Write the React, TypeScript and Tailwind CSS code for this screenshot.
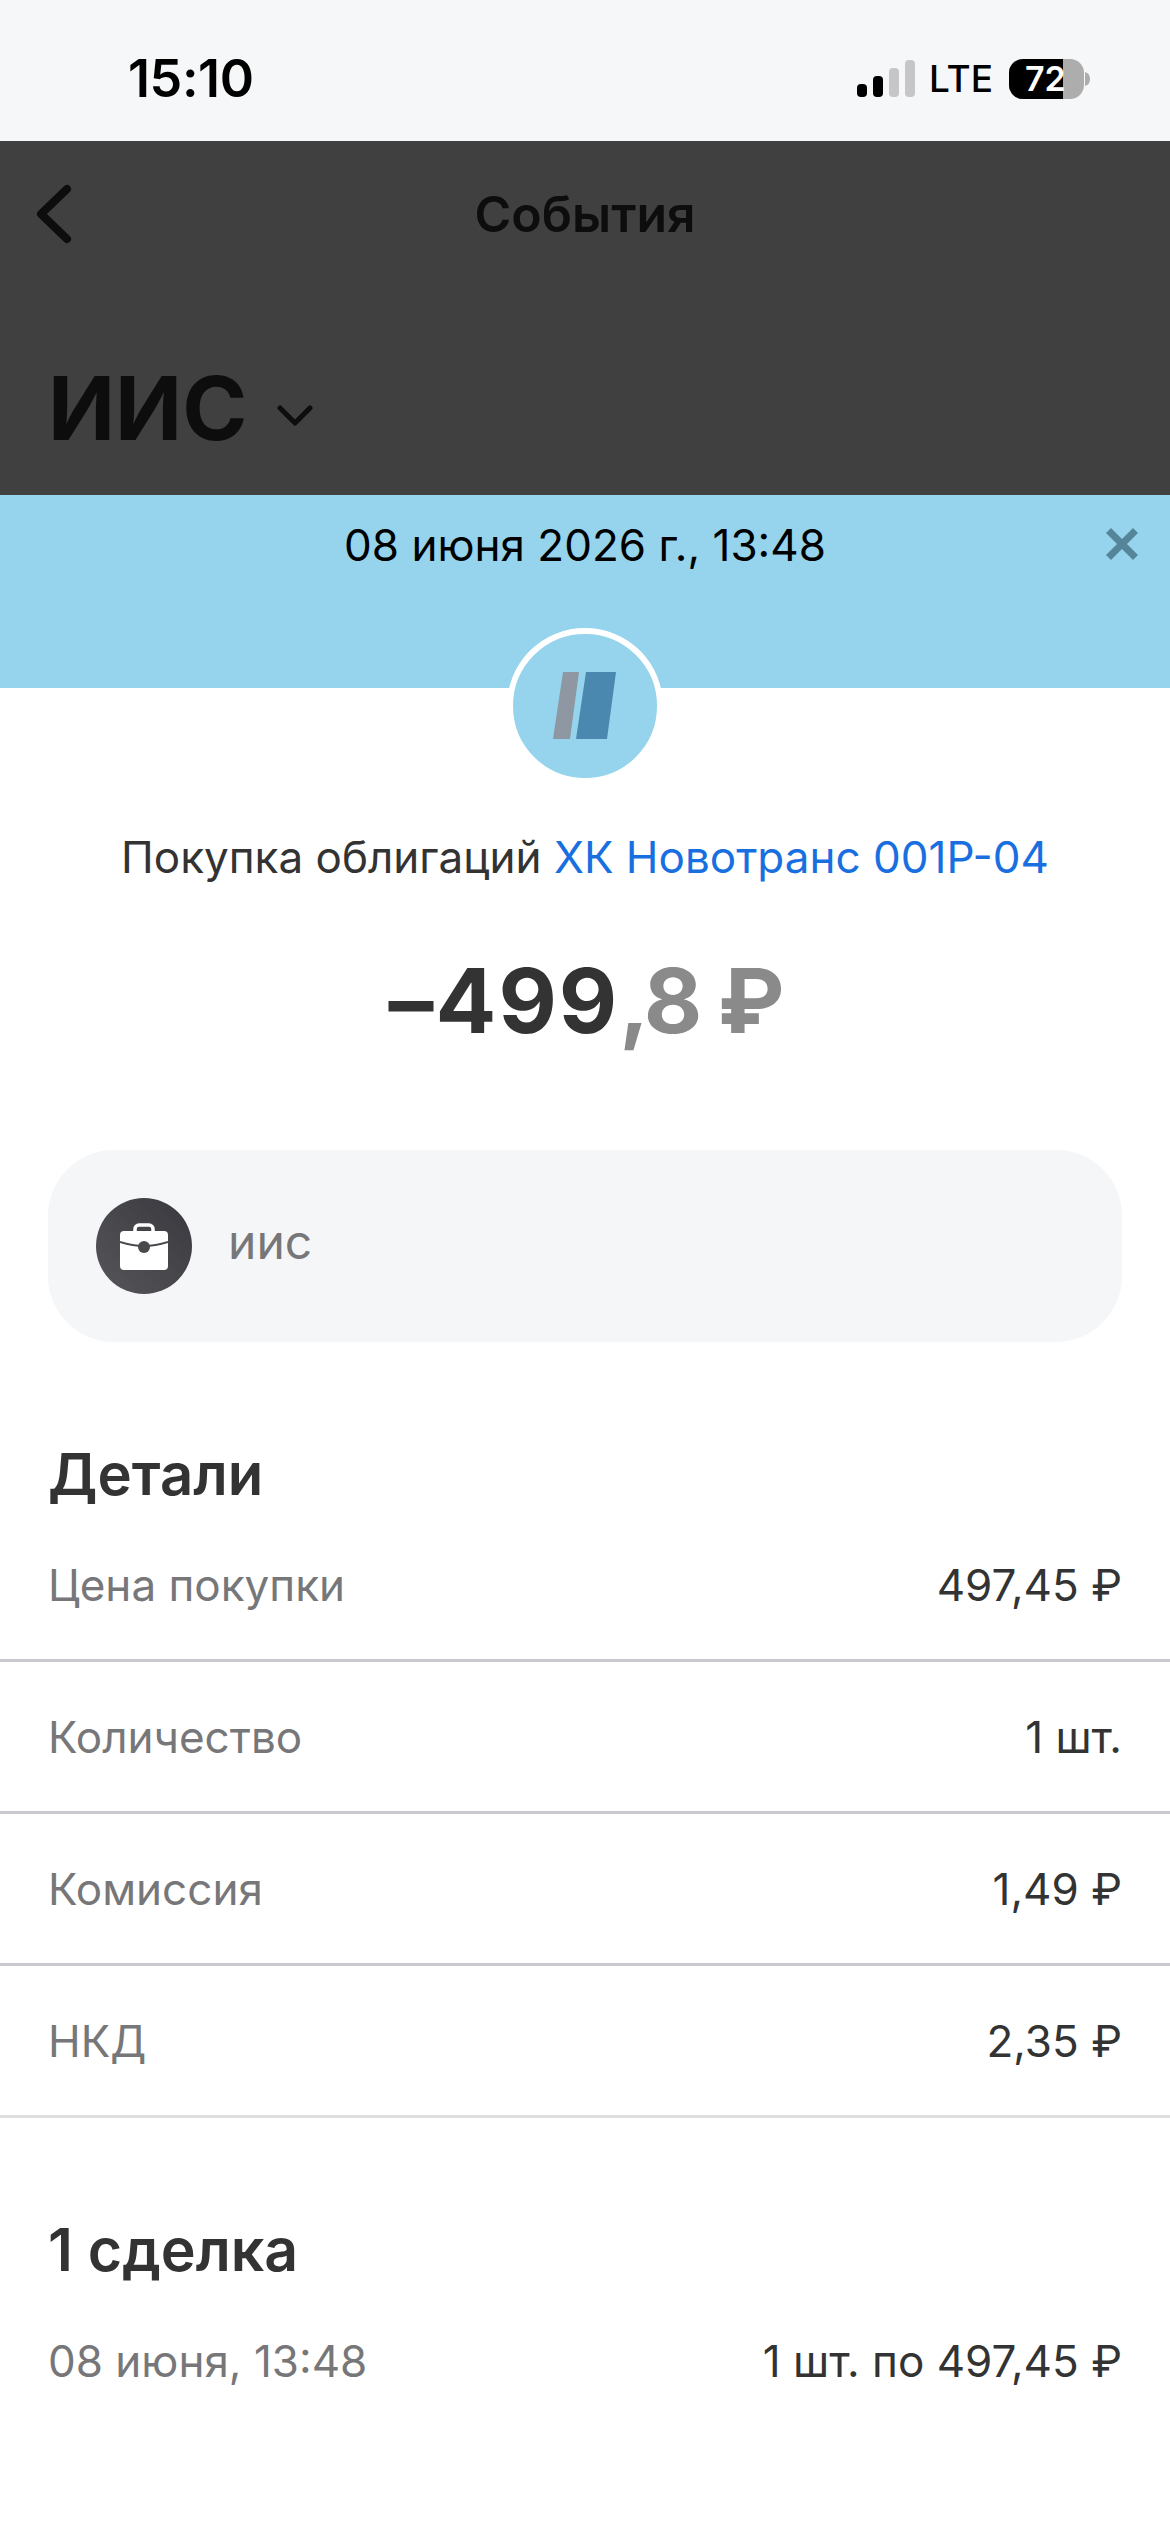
const font = { fontFamily: "Inter, 'Noto Sans', sans-serif" };

function Signal() {
  return (
    <div className="flex items-end gap-[6px] h-[37px]">
      <div className="w-[10px] h-[13px] rounded-[4px] bg-black" />
      <div className="w-[10px] h-[21px] rounded-[4px] bg-black" />
      <div className="w-[10px] h-[29px] rounded-[4px] bg-[#c6c6c8]" />
      <div className="w-[10px] h-[37px] rounded-[4px] bg-[#c6c6c8]" />
    </div>
  );
}

function Battery() {
  return (
    <div className="flex items-center">
      <div className="relative w-[75px] h-[40px] rounded-[14px] overflow-hidden bg-[#adadad]">
        <div className="absolute left-0 top-0 bottom-0 w-[54px] bg-black" />
        <div className="absolute left-[16px] top-0 bottom-0 flex items-center text-white text-[34px] font-semibold">72</div>
      </div>
      <svg width="6" height="14" viewBox="0 0 6 14" className="ml-[1px]">
        <path d="M0 0c3.500 1 5 3.500 5 7s-1.500 6-5 7z" fill="#adadad" />
      </svg>
    </div>
  );
}

function Row({ label, value, border = "border-[#c9c9cd]" }: { label: string; value: string; border?: string }) {
  return (
    <div className={`flex items-center justify-between h-[152px] px-[48px] border-b-[3px] ${border}`}>
      <span className="text-[44px] text-[#777779]">{label}</span>
      <span className="text-[44px] text-[#333333]">{value}</span>
    </div>
  );
}

export default function App() {
  return (
    <div className="w-[1170px] h-[2532px] bg-white overflow-hidden" style={font}>
      <div className="flex items-center justify-between h-[141px] bg-[#f6f7f8] pt-[16px] pl-[128px] pr-[79px]">
        <span className="text-[52px] font-semibold text-black tracking-[-0.4px]">15:10</span>
        <div className="flex items-center">
          <Signal />
          <span className="ml-[14px] mr-[16px] text-[37px] font-medium text-black">LTE</span>
          <Battery />
        </div>
      </div>

      <div className="h-[354px] bg-[#404040] flex flex-col">
        <div className="relative flex items-center justify-center h-[72px] mt-[37px]">
          <svg width="38" height="60" viewBox="0 0 38 60" className="absolute left-[35px]" fill="none">
            <path d="M32 5 6 30l26 25" stroke="#0d0d0d" strokeWidth="8" strokeLinecap="round" strokeLinejoin="round" />
          </svg>
          <span className="text-[50px] font-semibold text-[#0d0d0d]">События</span>
        </div>
        <div className="flex items-center pl-[48px] mt-[105px]">
          <span className="text-[88px] font-bold leading-[106px] text-[#0d0d0d]">ИИС</span>
          <svg width="36" height="22" viewBox="0 0 36 22" className="ml-[30px] mt-[16px]" fill="none">
            <path d="M3 3l15 15L33 3" stroke="#0d0d0d" strokeWidth="5" strokeLinecap="round" strokeLinejoin="round" />
          </svg>
        </div>
      </div>

      <div className="relative h-[193px] bg-[#95d4ec] flex justify-center pt-[24px]">
        <span className="text-[44px] leading-[52px] text-black">08 июня 2026 г., 13:48</span>
        <svg width="32" height="32" viewBox="0 0 32 32" className="absolute right-[32px] top-[33px]" fill="none">
          <path d="M2.500 2.500l27 27M29.500 2.500l-27 27" stroke="#558598" strokeWidth="7" />
        </svg>
      </div>

      <div className="flex justify-center -mt-[60px] relative">
        <div className="w-[156px] h-[156px] rounded-full bg-[#95d4ec] border-[6px] border-white flex items-center justify-center">
          <svg width="64" height="68" viewBox="0 0 64 68">
            <polygon points="10,0 26,0 17,67 0,67" fill="#8f97a3" />
            <polygon points="33,0 63,0 54,67 23,67" fill="#4b88b0" />
          </svg>
        </div>
      </div>

      <div className="mt-[47px] text-center text-[44px] leading-[52px] text-[#333333]">
        Покупка облигаций <span className="text-[#1a6fe0]">ХК Новотранс 001Р-04</span>
      </div>

      <div className="mt-[64px] text-center text-[90px] leading-[108px] font-bold text-[#333333] tracking-[2px]">
        –499<span className="text-[#8a8a8a] tracking-[-3px]">,8 ₽</span>
      </div>

      <div className="mx-[48px] mt-[95px] h-[192px] rounded-[66px] bg-[#f5f6f8] flex items-center pl-[48px]">
        <div className="w-[96px] h-[96px] rounded-full bg-gradient-to-tr from-[#56565a] to-[#38383e] flex items-center justify-center">
          <svg width="48" height="47" viewBox="0 0 48 47">
            <rect x="15" y="2" width="18" height="12" rx="4" fill="none" stroke="#fff" strokeWidth="3.500" />
            <rect x="0" y="8" width="48" height="39" rx="4" fill="#fff" />
            <path d="M0 19c8 2.500 16 4 24 4s16-1.500 24-4" fill="none" stroke="#48484d" strokeWidth="2" />
            <circle cx="24" cy="24" r="6" fill="#48484d" />
          </svg>
        </div>
        <span className="ml-[36px] mb-[8px] text-[48px] text-[#777779]">иис</span>
      </div>

      <h2 className="mt-[96px] px-[48px] text-[58px] leading-[72px] font-semibold text-[#333333]">Детали</h2>
      <div>
        <Row label="Цена покупки" value="497,45 ₽" />
        <Row label="Количество" value="1 шт." />
        <Row label="Комиссия" value="1,49 ₽" />
        <Row label="НКД" value="2,35 ₽" border="border-[#dedee0]" />
      </div>

      <h2 className="mt-[96px] px-[48px] text-[59px] leading-[72px] font-semibold text-[#333333]">1 сделка</h2>
      <div className="flex items-center justify-between px-[48px] mt-[42px]">
        <span className="text-[44px] text-[#777779]">08 июня, 13:48</span>
        <span className="text-[44px] text-[#333333]">1 шт. по 497,45 ₽</span>
      </div>
    </div>
  );
}
